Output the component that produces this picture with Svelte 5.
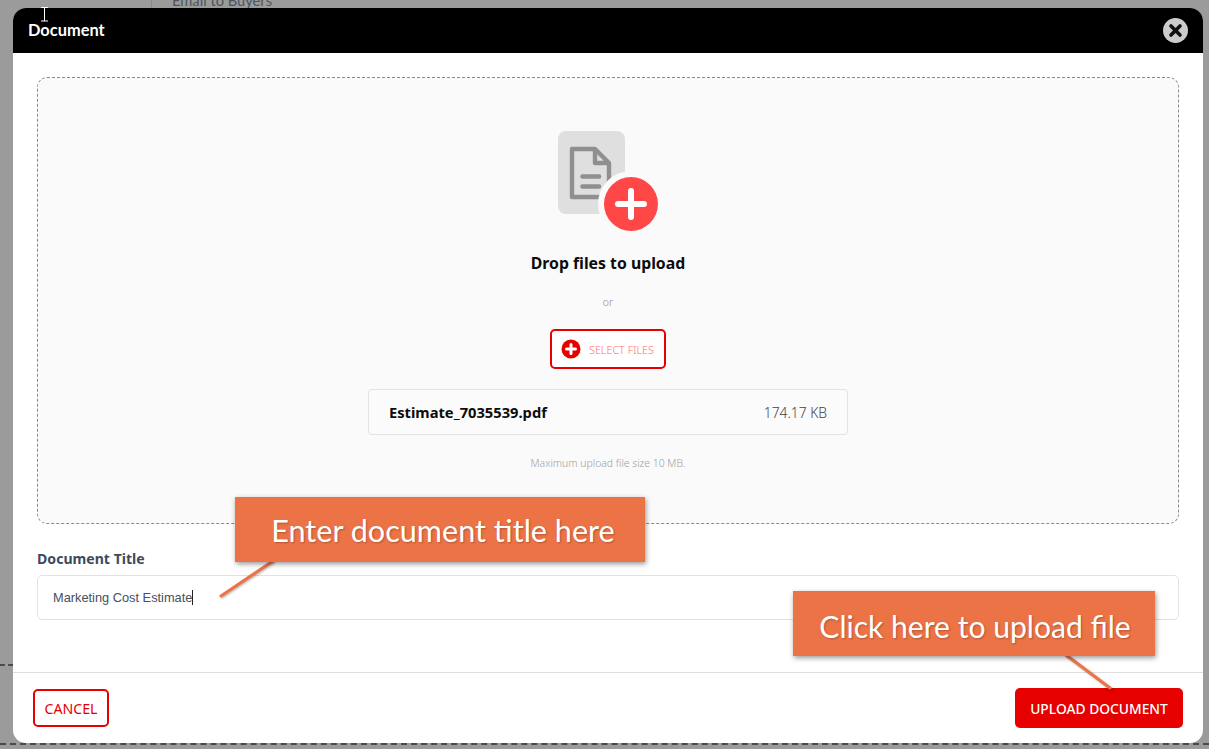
<script>
  const fileName = 'Estimate_7035539.pdf';
  const fileSize = '174.17 KB';
</script>

<div class="page">
  <div class="behind" aria-hidden="true">
    <span class="behind-rule"></span>
    <span class="behind-link">Email to Buyers</span>
    <span class="dash dash-left"></span>
    <span class="dash dash-bottom"></span>
  </div>

  <div class="modal">
    <header class="head">
      <h1>Document</h1>
      <button class="close" aria-label="Close">
        <svg width="25" height="25" viewBox="0 0 25 25">
          <circle cx="12.5" cy="12.5" r="12.5" fill="#cccccc" />
          <path d="M8 8l9 9M17 8l-9 9" stroke="#111" stroke-width="3.6" stroke-linecap="round" />
        </svg>
      </button>
    </header>

    <div class="body">
      <section class="drop">
        <svg class="art" width="102" height="102" viewBox="0 0 102 102">
          <rect width="67" height="83" rx="8" fill="#dfdfdf" />
          <path d="M14 18H37L51 32V66H14Z" fill="none" stroke="#8f8f8f" stroke-width="4.4" stroke-linejoin="round" />
          <path d="M37 18V32H51" fill="none" stroke="#8f8f8f" stroke-width="4.4" stroke-linejoin="round" />
          <path d="M24.500 45.500H41M24.500 55.500H41" stroke="#8f8f8f" stroke-width="4.600" stroke-linecap="round" />
          <circle cx="73" cy="73" r="33" fill="#fafafa" />
          <circle cx="73" cy="73" r="27" fill="#ff4747" />
          <path d="M60 73H86M73 60V86" stroke="#fff" stroke-width="6" stroke-linecap="round" />
        </svg>
        <h2>Drop files to upload</h2>
        <p class="or">or</p>
        <button class="select">
          <svg width="20" height="20" viewBox="0 0 20 20">
            <circle cx="10" cy="10" r="9.500" fill="#e60000" />
            <path d="M5.500 10h9M10 5.500v9" stroke="#fff" stroke-width="3" stroke-linecap="round" />
          </svg>
          <span>SELECT FILES</span>
        </button>
        <div class="file">
          <strong>{fileName}</strong>
          <span>{fileSize}</span>
        </div>
        <p class="max">Maximum upload file size 10 MB.</p>
      </section>

      <label class="label" for="doc-title">Document Title</label>
      <div class="input" id="doc-title"><span>Marketing Cost Estimate</span><i class="caret"></i></div>
    </div>

    <footer class="foot">
      <button class="cancel">CANCEL</button>
      <button class="upload">UPLOAD DOCUMENT</button>
    </footer>
  </div>

  <svg class="leaders" width="1209" height="749" viewBox="0 0 1209 749" aria-hidden="true">
    <path d="M273 561L221 596" />
    <path d="M1066 655L1110 688" />
  </svg>
  <div class="callout callout-title"><span>Enter document title here</span></div>
  <div class="callout callout-upload"><span>Click here to upload file</span></div>
  <svg class="ibeam" width="9" height="15" viewBox="0 0 9 15" aria-hidden="true">
    <path d="M1 .5H8M4.500 .5V14M1 14H8" stroke="#fff" stroke-width="1" fill="none" />
  </svg>
</div>

<style>
  :global(body) {
    margin: 0;
    background: #9b9b9b;
  }
  .page {
    position: relative;
    box-sizing: border-box;
    width: 1209px;
    height: 749px;
    padding: 8px 6px 6px 13px;
    overflow: hidden;
    background: #9b9b9b;
    font-family: "Noto Sans", sans-serif;
  }
  .behind {
    position: absolute;
    inset: 0;
  }
  .behind-rule {
    position: absolute;
    left: 151px;
    top: 0;
    width: 1px;
    height: 8px;
    background: #8a8a8a;
  }
  .behind-link {
    position: absolute;
    left: 172px;
    top: -9px;
    font: 14.700px/18px "Lato", sans-serif;
    color: #4e5560;
  }
  .dash {
    position: absolute;
    height: 0;
    border-top: 2px dashed #4a4a4a;
  }
  .dash-left {
    left: 0;
    top: 664px;
    width: 13px;
  }
  .dash-bottom {
    left: 0;
    top: 743px;
    width: 1209px;
  }
  .modal {
    position: relative;
    display: flex;
    flex-direction: column;
    width: 1190px;
    height: 735px;
    border-radius: 13px;
    overflow: hidden;
    background: #fff;
  }
  .head {
    flex: none;
    display: flex;
    align-items: center;
    justify-content: space-between;
    height: 45px;
    padding: 0 15px;
    background: #000;
  }
  h1 {
    margin: -2px 0 0;
    font: 700 16.400px/20px "Lato", sans-serif;
    color: #fff;
  }
  .close {
    display: block;
    width: 25px;
    height: 25px;
    padding: 0;
    border: 0;
    background: none;
  }
  .close svg,
  .art {
    display: block;
  }
  .body {
    flex: 1;
    padding: 24px 24px 0;
  }
  .drop {
    box-sizing: border-box;
    display: flex;
    flex-direction: column;
    align-items: center;
    height: 447px;
    padding-top: 53px;
    border: 1px dashed #8a8a8a;
    border-radius: 10px;
    background: #fafafa;
  }
  .art {
    margin-left: 2px;
  }
  h2 {
    margin: 18px 0 0;
    font: 700 15.800px/24px "Noto Sans", sans-serif;
    color: #0c0c0c;
  }
  .or {
    margin: 20px 0 0;
    font: 300 10.500px/14px "Noto Sans", sans-serif;
    color: #8f8f8f;
  }
  .select {
    display: flex;
    align-items: center;
    gap: 8px;
    box-sizing: border-box;
    width: 116px;
    height: 40px;
    margin-top: 20px;
    padding: 0 0 0 9px;
    border: 2px solid #e60000;
    border-radius: 5px;
    background: #fff;
    color: #ff7070;
    font: 300 10.800px/14px "Noto Sans", sans-serif;
  }
  .select span {
    padding-top: 2px;
  }
  .select svg {
    flex: none;
  }
  .file {
    box-sizing: border-box;
    display: flex;
    align-items: center;
    justify-content: space-between;
    width: 480px;
    height: 46px;
    margin-top: 20px;
    padding: 0 20px;
    border: 1px solid #e3e3e3;
    border-radius: 4px;
    background: #fbfbfb;
    font-size: 14px;
  }
  .file strong {
    font-weight: 700;
    font-size: 14.700px;
    color: #0c0c0c;
  }
  .file span {
    font-weight: 300;
    font-size: 13.800px;
    color: #444;
  }
  .max {
    margin: 21px 0 0;
    font: 300 10.400px/14px "Noto Sans", sans-serif;
    color: #a0a0a0;
  }
  .label {
    display: block;
    margin-top: 25px;
    font: 700 14.100px/20px "Noto Sans", sans-serif;
    color: #3d4a5c;
  }
  .input {
    box-sizing: border-box;
    display: flex;
    align-items: center;
    height: 45px;
    margin-top: 6px;
    padding: 0 15px;
    border: 1px solid #e2e2e2;
    border-radius: 5px;
    font: 400 12.800px/16px "Liberation Sans", sans-serif;
    color: #46505f;
  }
  .caret {
    display: block;
    width: 1px;
    height: 15px;
    background: #222;
  }
  .foot {
    flex: none;
    display: flex;
    align-items: center;
    justify-content: space-between;
    box-sizing: border-box;
    height: 71px;
    padding: 0 20px;
    border-top: 1px solid #dedede;
  }
  .cancel {
    box-sizing: border-box;
    width: 76px;
    height: 38px;
    border: 2px solid #e60000;
    border-radius: 5px;
    background: #fff;
    color: #e60000;
    font: 400 14.200px/18px "Noto Sans", sans-serif;
    padding: 1px 0 0;
  }
  .upload {
    box-sizing: border-box;
    width: 168px;
    height: 40px;
    border: 0;
    border-radius: 5px;
    background: #e60000;
    color: #fff;
    font: 500 13.800px/18px "Noto Sans", sans-serif;
    padding: 1px 0 0;
  }
  .leaders {
    position: absolute;
    left: 0;
    top: 0;
  }
  .leaders path {
    fill: none;
    stroke: #ec7346;
    stroke-width: 3;
    stroke-linecap: round;
    filter: drop-shadow(1px 1px 1px rgba(0, 0, 0, 0.3));
  }
  .callout {
    position: absolute;
    display: flex;
    align-items: center;
    justify-content: center;
    height: 65px;
    background: #ec7346;
    box-shadow: 1px 2px 5px rgba(0, 0, 0, 0.4);
    color: #fff;
    font: 400 30px/40px "Lato", sans-serif;
    white-space: nowrap;
    text-shadow: 1px 1px 2px rgba(0, 0, 0, 0.25);
  }
  .callout span {
    padding-top: 2px;
  }
  .callout-title {
    left: 235px;
    top: 497px;
    width: 410px;
    font-size: 30.600px;
  }
  .callout-title span {
    padding-left: 6px;
    padding-top: 3px;
  }
  .callout-upload {
    left: 793px;
    top: 591px;
    width: 362px;
    font-size: 30.100px;
  }
  .callout-upload span {
    padding-top: 4px;
    padding-left: 2px;
  }
  .ibeam {
    position: absolute;
    left: 40px;
    top: 7px;
  }
</style>
